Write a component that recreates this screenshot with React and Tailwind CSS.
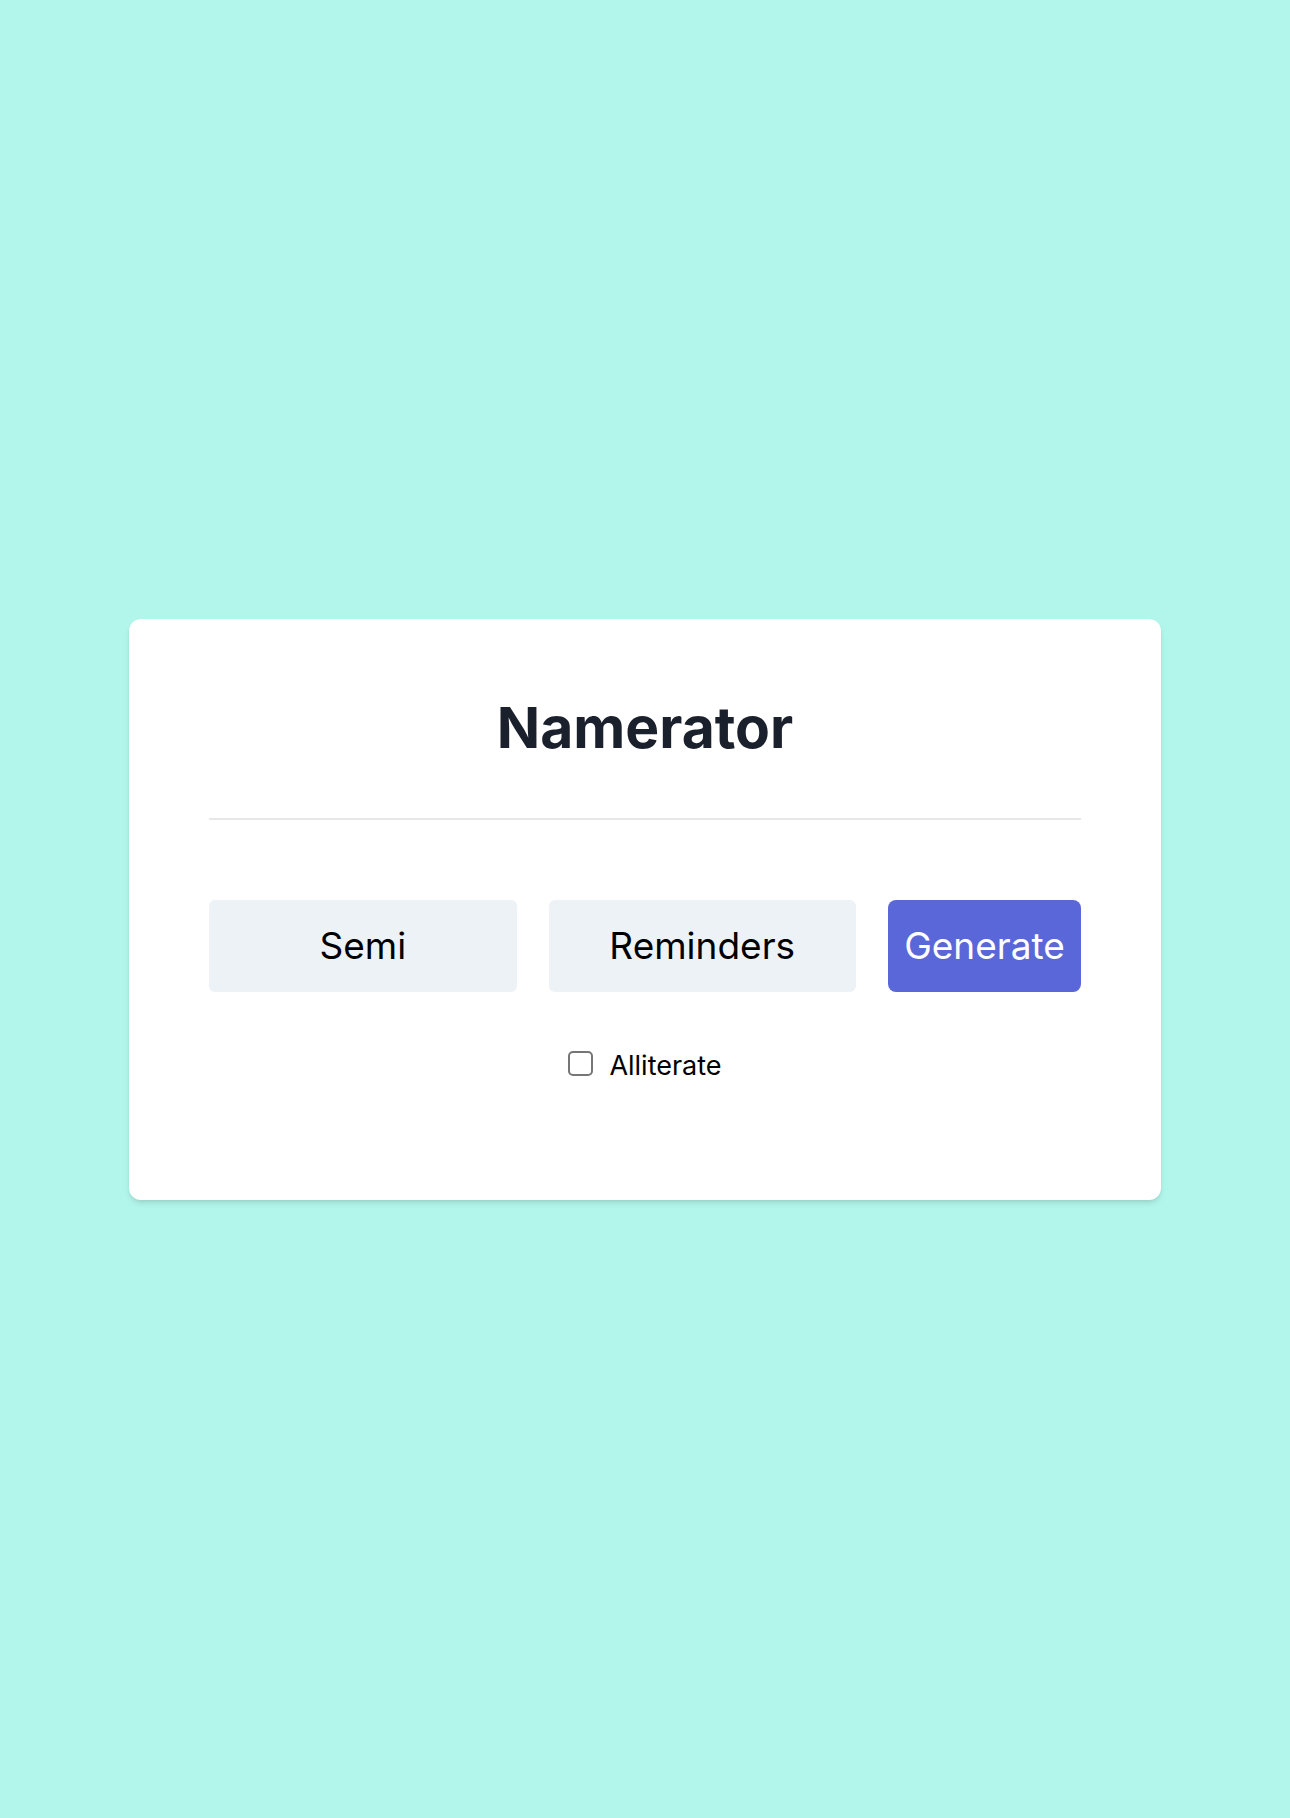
import React, { useState } from 'react';

export default function App() {
  const [first, setFirst] = useState('Semi');
  const [second, setSecond] = useState('Reminders');
  const [alliterate, setAlliterate] = useState(false);

  return (
    <div className="min-h-screen bg-[#b2f5ea] flex items-center justify-center font-['Inter',sans-serif]">
      <div className="w-4/5 bg-white rounded-xl shadow-md px-20 pt-[80px] pb-[114px]">
        <h1 className="text-center text-[57px] leading-none font-bold text-[#1a202c]">Namerator</h1>
        <hr className="mt-[62px] border-t-2 border-[#e7e7e7]" />
        <div className="mt-[80px] flex gap-8">
          <input
            value={first}
            onChange={e => setFirst(e.target.value)}
            className="flex-1 min-w-0 h-[92px] bg-[#edf2f7] rounded-md text-center text-[37px] text-black outline-none"
          />
          <input
            value={second}
            onChange={e => setSecond(e.target.value)}
            className="flex-1 min-w-0 h-[92px] bg-[#edf2f7] rounded-md text-center text-[37px] text-black outline-none"
          />
          <button className="h-[92px] w-[193px] bg-[#5a67d8] rounded-lg text-white text-[37px]">
            Generate
          </button>
        </div>
        <label className="mt-[54px] flex items-center justify-center gap-4 text-[27px] leading-[40px] text-black">
          <input
            type="checkbox"
            checked={alliterate}
            onChange={e => setAlliterate(e.target.checked)}
            className="appearance-none w-[25px] h-[25px] border-2 border-[#767676] rounded-[5px] bg-white -mt-1"
          />
          <span>Alliterate</span>
        </label>
      </div>
    </div>
  );
}
